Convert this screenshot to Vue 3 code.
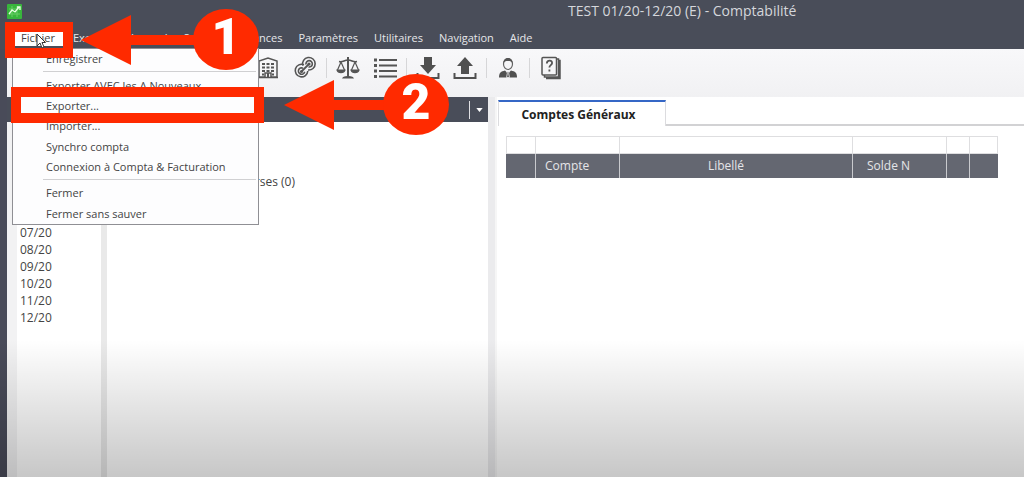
<script setup>
const menus = ['Exercice', 'Journal', 'Saisie', 'Echéances', 'Paramètres', 'Utilitaires', 'Navigation', 'Aide']
const fileMenu = [
  'Enregistrer', null, 'Exporter AVEC les A Nouveaux', 'Exporter...', 'Importer...',
  'Synchro compta', 'Connexion à Compta & Facturation', null, 'Fermer', 'Fermer sans sauver',
]
const months = ['07/20', '08/20', '09/20', '10/20', '11/20', '12/20']
</script>

<template>
  <div class="app">
    <header class="head">
      <div class="titlebar">
        <svg class="logo" viewBox="0 0 15 15" aria-hidden="true">
          <rect width="15" height="15" rx="1" fill="#38b63c" />
          <path d="M2 5h11M2 10h11M5 2v11M10 2v11" stroke="#68ce66" stroke-width="1" />
          <path d="M2 10l3-4 3 2 4-5M10 3h3v3" fill="none" stroke="#e8ffe4" stroke-width="1.3" />
        </svg>
        <h1>TEST 01/20-12/20 (E) - Comptabilité</h1>
      </div>
      <nav class="menubar">
        <button class="open" aria-haspopup="true" aria-expanded="true">Fichier</button>
        <button v-for="m in menus" :key="m">{{ m }}</button>
      </nav>
    </header>

    <div class="shell">
      <div class="toolbar" role="toolbar">
        <button aria-label="Société">
          <svg viewBox="0 0 24 24"><path d="M3 21V5l9-3 9 3v16h-6v-4H9v4zM2 21.500h20" fill="none" stroke="#555" stroke-width="1.500" /><path d="M6 8h3M10.500 8h3M15 8h3M6 11.500h3M10.500 11.500h3M15 11.500h3M6 15h3M10.500 15h3M15 15h3M6 18.500h2M16 18.500h2M12 17v4" stroke="#555" stroke-width="2" /></svg>
        </button>
        <button aria-label="Lien">
          <svg viewBox="0 0 24 24" fill="none" stroke="#555" stroke-width="1.600"><path d="M11 8.800A6.300 6.300 0 1 0 14.800 15M10 12.200a3.200 3.200 0 1 0 1.700 3.600" /><path d="M9.800 9.500A6.300 6.300 0 1 1 15 14M13 8.500A3.200 3.200 0 1 1 15.500 11" /><path d="M8.500 15.500l7.500-7.500" stroke-width="1.800" /><circle cx="8.500" cy="15.500" r=".8" /><circle cx="16" cy="8" r=".8" /></svg>
        </button>
        <i class="sep"></i>
        <button aria-label="Balance">
          <svg viewBox="0 0 24 24" fill="none" stroke="#555" stroke-width="1.200"><path d="M12 1v20" stroke-width="2" /><path d="M3 5.500c4 1 5-1.500 9-1.500s5 2.500 9 1.500" stroke-width="1.600" /><path d="M5 6L1.500 14M5 6l3.500 8M19 6l-3.500 8M19 6l3.500 8" /><path d="M1 14h8c-1 3.500-7 3.500-8 0zM15 14h8c-1 3.500-7 3.500-8 0zM7 22c1-2 9-2 10 0z" fill="#555" /></svg>
        </button>
        <button aria-label="Liste">
          <svg viewBox="0 0 24 24" stroke="#555"><path d="M6 4h18M6 9.500h18M6 15h18M6 20.500h18" stroke-width="1.800" /><path d="M1 4h3M1 9.500h3M1 15h3M1 20.500h3" stroke-width="3" /></svg>
        </button>
        <i class="sep"></i>
        <button aria-label="Télécharger">
          <svg viewBox="0 0 24 24"><path d="M8 1h8v8h4l-8 9-8-9h4z" fill="#505050" /><path d="M1.500 17v5h21v-5" fill="none" stroke="#505050" stroke-width="2" /></svg>
        </button>
        <button aria-label="Envoyer">
          <svg viewBox="0 0 24 24"><path d="M8 18h8v-8h4l-8-9-8 9h4z" fill="#505050" /><path d="M1.500 17v5h21v-5" fill="none" stroke="#505050" stroke-width="2" /></svg>
        </button>
        <i class="sep"></i>
        <button aria-label="Utilisateur">
          <svg viewBox="0 0 24 24"><path d="M3 21.500c0-5 2-6 6-7l3 3 3-3c4 1 6 2 6 7z" fill="#505050" /><path d="M11 15.500h2l-.3 2 .8 4h-3l.8-4z" fill="#505050" stroke="#f5f5f7" stroke-width=".8" /><ellipse cx="12" cy="8" rx="4.500" ry="5.500" fill="none" stroke="#666" stroke-width="1.200" /><path d="M7.500 8C6.500 0 17.500 0 16.500 8c-1-3-2-3-4.500-3s-3.500 0-4.500 3z" fill="#555" /></svg>
        </button>
        <i class="sep"></i>
        <button aria-label="Aide">
          <svg viewBox="0 0 24 24" fill="none" stroke="#555" stroke-width="1.500"><path d="M18 3h1.500v18H5.500v-2M20 4.500h1v18H7" /><rect x="3" y="1.500" width="14.500" height="17.500" rx="1" /><path d="M7.800 7.500c.3-4 6-3.500 5.200 0-.4 1.700-2.600 1.800-2.600 4M10.400 13.500v2" stroke-width="1.800" /></svg>
        </button>
      </div>

      <main class="body">
        <section class="left">
          <div class="picker">
            <button aria-label="Choisir"><svg viewBox="0 0 8 5"><path d="M0 0h8L4 5z" fill="#fff" /></svg></button>
          </div>
          <div class="columns">
            <ul class="months">
              <li v-for="m in months" :key="m">{{ m }}</li>
            </ul>
            <div class="split"></div>
            <p class="journal">Opérations diverses (0)</p>
          </div>
        </section>
        <div class="split wide"></div>
        <section class="right">
          <div class="tabs" role="tablist">
            <button class="tab" role="tab" aria-selected="true">Comptes Généraux</button>
          </div>
          <table>
            <colgroup><col class="c1"><col class="c2"><col><col class="c4"><col class="c5"><col class="c6"></colgroup>
            <thead>
              <tr class="filter"><td v-for="n in 6" :key="n"></td></tr>
              <tr><th></th><th class="start">Compte</th><th class="label">Libellé</th><th class="solde">Solde N</th><th></th><th></th></tr>
            </thead>
          </table>
        </section>
      </main>
    </div>

    <div class="dropdown" role="menu">
      <template v-for="(item, i) in fileMenu" :key="i">
        <button v-if="item" role="menuitem">{{ item }}</button>
        <hr v-else>
      </template>
    </div>

    <div class="shade"></div>

    <div class="frame first"></div>
    <div class="frame second"></div>
    <svg class="cursor" viewBox="0 0 10 16"><path d="M1 1v12l3-3 2 5 2-1-2-4.500h3.500z" fill="#fff" stroke="#333" stroke-width="1" /></svg>
    <div class="callout one">
      <svg viewBox="0 0 130 50"><path d="M0 25L50 0v20h80v10H50v20z" /></svg>
      <span>1</span>
    </div>
    <div class="callout two">
      <svg viewBox="0 0 130 50"><path d="M0 25L50 0v20h80v10H50v20z" /></svg>
      <span>2</span>
    </div>
  </div>
</template>

<style>
body { margin: 0; }
</style>

<style scoped>
* { box-sizing: border-box; }
.app {
  position: relative;
  min-height: 100vh;
  display: flex;
  flex-direction: column;
  overflow: hidden;
  background: #fff;
  color: #444;
  font: 11px/16px "Open Sans", "Noto Sans", sans-serif;
}
button { border: 0; padding: 0; background: none; font: inherit; color: inherit; }
.head { background: #494d59; color: #e6e7ea; height: 49px; }
.titlebar { display: flex; height: 26px; padding-left: 7px; align-items: center; }
.logo { width: 15px; height: 15px; margin-bottom: 4px; }
h1 { margin: 0 0 4px 546px; font-size: 14px; line-height: 20px; font-weight: 400; color: #d5d7dc; white-space: nowrap; }
.menubar { display: flex; gap: 16px; padding: 4px 0 0 13px; }
.menubar button { height: 16px; }
.menubar .open { width: 50px; margin-right: -6px; background: #fff; color: #444; }
.shell { flex: 1; display: flex; flex-direction: column; border-left: 7px solid #494b59; }
.toolbar {
  display: flex;
  align-items: center;
  gap: 13px;
  height: 48px;
  padding: 0 0 10px 249px;
  background: linear-gradient(#f8f8fa, #f1f1f3);
}
.toolbar button { width: 24px; height: 24px; }
.toolbar svg { display: block; width: 24px; height: 24px; }
.sep { width: 1px; height: 20px; margin: 0 -4px; background: #d6d6d8; }
.body { flex: 1; display: flex; }
.left { width: 481px; display: flex; flex-direction: column; }
.picker { height: 25px; display: flex; justify-content: flex-end; align-items: center; background: #494d59; }
.picker button { width: 19px; height: 18px; border-left: 1px solid #e0e0e4; display: flex; align-items: center; justify-content: center; }
.picker svg { width: 7px; height: 4px; }
.columns { flex: 1; display: flex; }
.months { width: 94px; margin: 0; padding: 102px 0 0 3px; border-left: 10px solid #f2f2f3; list-style: none; font-size: 12px; line-height: 17px; }
.split { width: 6px; background: #e9e9e9; }
.split.wide { width: 9px; background: #ebebed; border-right: 2px solid #f6f6f6; }
.journal { margin: 52px 0 0 59px; font-size: 12px; }
.right { flex: 1; min-width: 0; padding-top: 3px; }
.tabs { display: flex; height: 26px; margin-left: 1px; }
.tabs::after { content: ""; flex: 1; border-bottom: 2px solid #d2d2d4; }
.tab { width: 168px; padding: 2px 7px 0 0; border: solid #dcdcdf; border-width: 2px 1px 0; border-top-color: #3567c6; font-size: 12px; font-weight: 700; color: #222; }
table { width: calc(100% - 35px); margin: 10px 0 0 9px; table-layout: fixed; border-collapse: collapse; }
.c1 { width: 29px; }
.c2 { width: 84px; }
.c4 { width: 94px; }
.c5 { width: 23px; }
.c6 { width: 28px; }
td { height: 17px; padding: 0; border: 1px solid #dedee0; }
th { height: 24px; padding: 0; border: 1px solid #c9cace; border-width: 0 1px; background: #646771; color: #e4e5e8; font-size: 12px; font-weight: 400; }
th:first-child { border-left-color: #646771; }
th:last-child { border-right-color: #646771; }
th.start { padding-left: 9px; text-align: left; }
th.label { padding-right: 20px; }
th.solde { padding-left: 14px; text-align: left; }
.dropdown {
  position: absolute;
  left: 12px;
  top: 48px;
  width: 247px;
  height: 177px;
  display: flex;
  flex-direction: column;
  border: 1px solid #8f8f94;
  background: #fdfdfe;
}
.dropdown button { flex: 1; padding-left: 33px; text-align: left; white-space: nowrap; }
.dropdown hr { width: 213px; margin: 2px 0 3px 30px; border: 0; border-top: 1px solid #d0d0d2; }
.shade {
  position: absolute;
  inset: auto 0 0 0;
  height: 137px;
  pointer-events: none;
  background: linear-gradient(rgba(0, 0, 0, 0), rgba(0, 0, 0, 0.22));
}
.frame { position: absolute; height: 36px; border: 10px solid #ff2a00; }
.frame.first { left: 5px; top: 22px; width: 68px; }
.frame.second { left: 11px; top: 87px; width: 253px; }
.cursor { position: absolute; left: 36px; top: 33px; width: 10px; height: 16px; }
.callout { position: absolute; display: flex; align-items: center; height: 61px; }
.callout svg { width: 130px; height: 50px; fill: #ff2a00; }
.callout span {
  width: 66px;
  height: 61px;
  margin-left: -18px;
  border-radius: 50%;
  background: #ff2a00;
  color: #fff;
  font: 900 50px/56px Roboto, sans-serif;
  text-align: center;
}
.callout.one { left: 81px; top: 9px; }
.callout.two { left: 284px; top: 74px; }
.callout.two span { margin-left: -31px; }
</style>
